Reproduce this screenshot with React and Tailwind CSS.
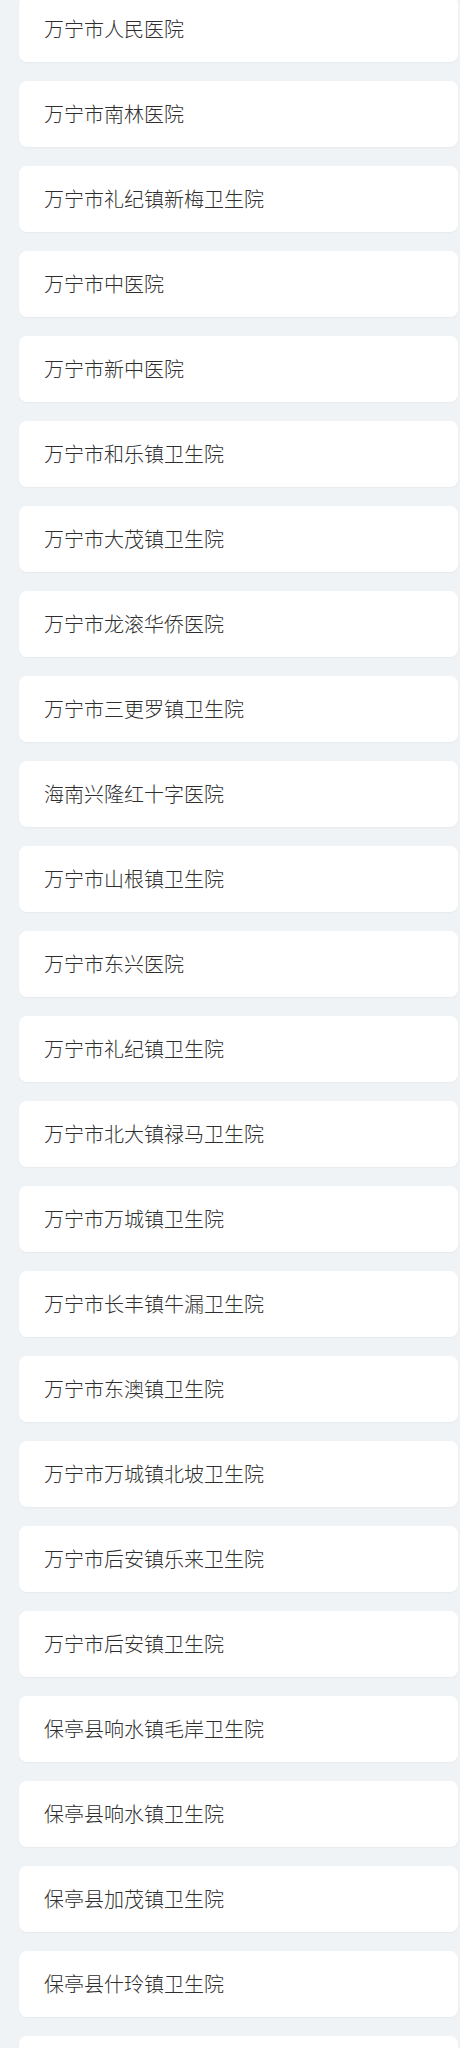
import React from "react";

const items = [
  "万宁市人民医院",
  "万宁市南林医院",
  "万宁市礼纪镇新梅卫生院",
  "万宁市中医院",
  "万宁市新中医院",
  "万宁市和乐镇卫生院",
  "万宁市大茂镇卫生院",
  "万宁市龙滚华侨医院",
  "万宁市三更罗镇卫生院",
  "海南兴隆红十字医院",
  "万宁市山根镇卫生院",
  "万宁市东兴医院",
  "万宁市礼纪镇卫生院",
  "万宁市北大镇禄马卫生院",
  "万宁市万城镇卫生院",
  "万宁市长丰镇牛漏卫生院",
  "万宁市东澳镇卫生院",
  "万宁市万城镇北坡卫生院",
  "万宁市后安镇乐来卫生院",
  "万宁市后安镇卫生院",
  "保亭县响水镇毛岸卫生院",
  "保亭县响水镇卫生院",
  "保亭县加茂镇卫生院",
  "保亭县什玲镇卫生院",
  "",
];

export default function App() {
  return (
    <div
      className="w-[460px] h-[2048px] overflow-hidden bg-[#eff3f6] pl-[19px] pr-[2px]"
      style={{ fontFamily: '"Noto Sans CJK SC", "Noto Sans", sans-serif' }}
    >
      <div className="mt-[-4px] flex flex-col gap-[19px]">
        {items.map((name, i) => (
          <div
            key={i}
            className="h-[66px] shrink-0 rounded-[8px] bg-white flex items-center pl-[25px] shadow-[0_1px_2px_rgba(0,0,0,0.04)]"
          >
            {name && (
              <span className="text-[20px] font-light leading-none text-[#2e2e2e]">{name}</span>
            )}
          </div>
        ))}
      </div>
    </div>
  );
}
